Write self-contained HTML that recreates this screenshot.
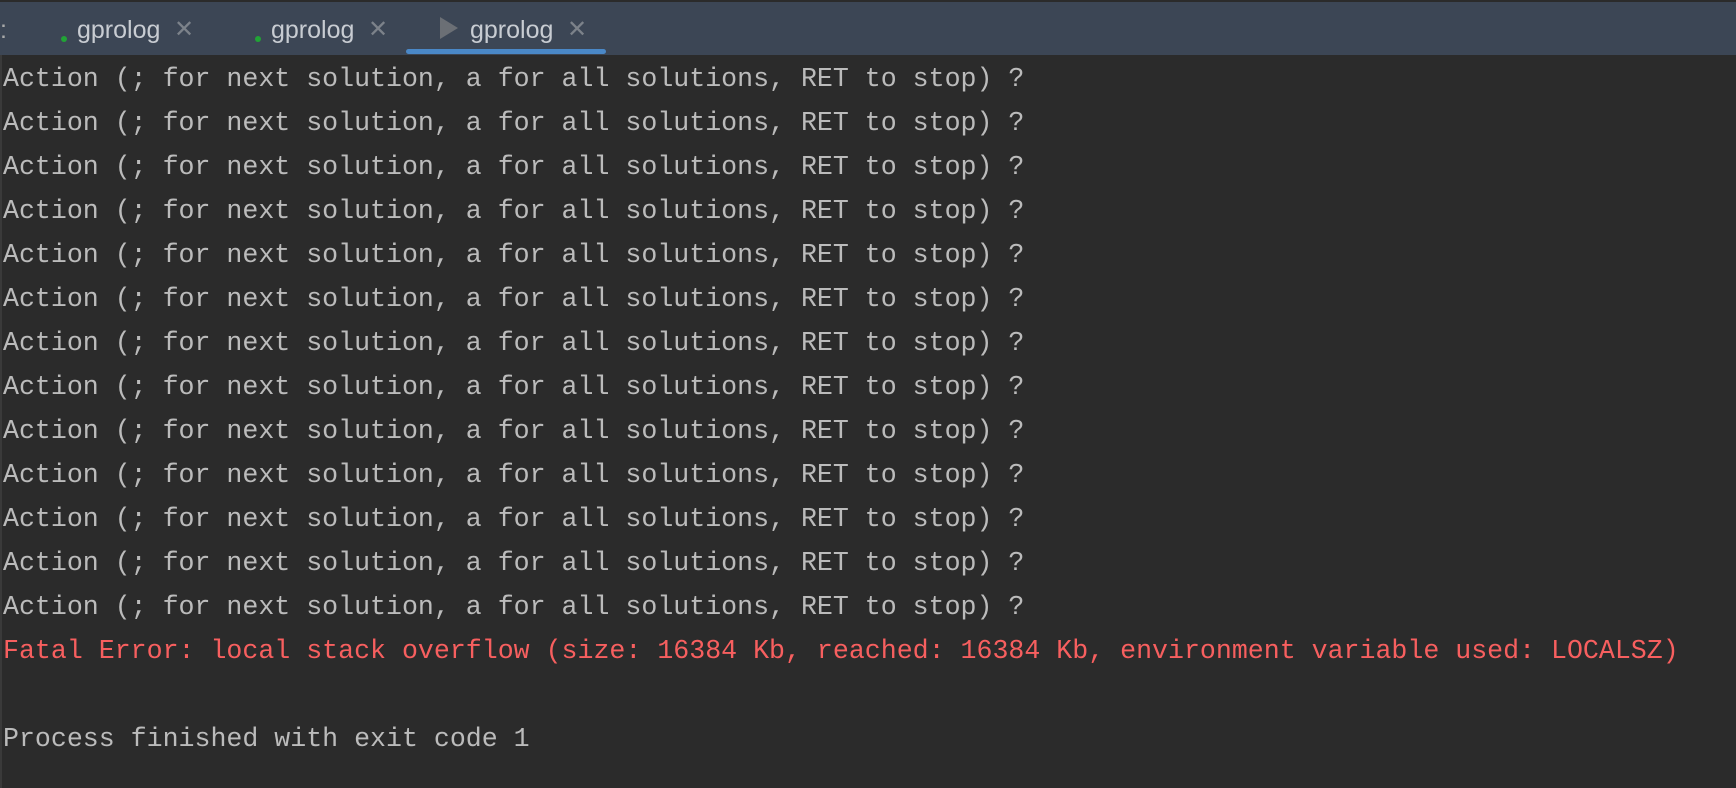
<!DOCTYPE html>
<html><head><style>
body{margin:0;width:1736px;height:788px;background:#2b2b2b;overflow:hidden;position:relative;font-family:"Liberation Sans",sans-serif}
.bar{position:absolute;left:0;top:2px;width:1736px;height:53px;background:#3c4655}
.top{position:absolute;left:0;top:0;width:1736px;height:2px;background:#2b2b2b}
.t{position:absolute;top:16px;font-size:25px;color:#c8ccd2}
.x{position:absolute;top:15px;font-size:24px;color:#7c828a}
.dot{position:absolute;top:36px;width:6px;height:6px;border-radius:50%;background:#21a336}
.ul{position:absolute;left:406px;top:49px;width:200px;height:5px;border-radius:3px;background:#4a88c7}
.out{position:absolute;left:3px;top:57px;font-family:"Liberation Mono",monospace;font-size:26.6px;line-height:44px;color:#bbbbbb;white-space:pre;letter-spacing:0}
.r{color:#f75f5f}
.edge{position:absolute;left:0;top:55px;width:2px;height:733px;background:#3a3a3a}
</style></head><body>
<div class="top"></div>
<div class="bar"></div>
<div class="t" style="left:0;color:#aaa">:</div>
<div class="dot" style="left:61px"></div><div class="t" style="left:77px">gprolog</div><div class="x" style="left:174px">✕</div>
<div class="dot" style="left:255px"></div><div class="t" style="left:271px">gprolog</div><div class="x" style="left:368px">✕</div>
<svg style="position:absolute;left:440px;top:17px" width="18" height="22"><path d="M0 0L18 11L0 22Z" fill="#6b6f75"/></svg>
<div class="t" style="left:470px">gprolog</div><div class="x" style="left:567px">✕</div>
<div class="ul"></div>
<div class="edge"></div>
<div class="out">Action (; for next solution, a for all solutions, RET to stop) ?
Action (; for next solution, a for all solutions, RET to stop) ?
Action (; for next solution, a for all solutions, RET to stop) ?
Action (; for next solution, a for all solutions, RET to stop) ?
Action (; for next solution, a for all solutions, RET to stop) ?
Action (; for next solution, a for all solutions, RET to stop) ?
Action (; for next solution, a for all solutions, RET to stop) ?
Action (; for next solution, a for all solutions, RET to stop) ?
Action (; for next solution, a for all solutions, RET to stop) ?
Action (; for next solution, a for all solutions, RET to stop) ?
Action (; for next solution, a for all solutions, RET to stop) ?
Action (; for next solution, a for all solutions, RET to stop) ?
Action (; for next solution, a for all solutions, RET to stop) ?
<span class="r">Fatal Error: local stack overflow (size: 16384 Kb, reached: 16384 Kb, environment variable used: LOCALSZ)</span>

Process finished with exit code 1</div>
</body></html>
